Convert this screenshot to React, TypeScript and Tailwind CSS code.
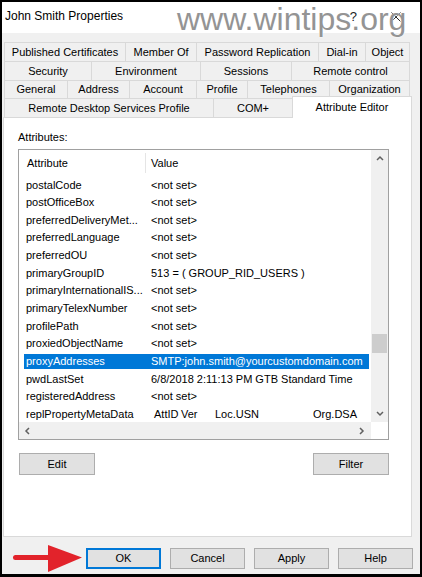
import React from "react";

type Tab = { label: string; w: string };

const tabRows: { h: string; tabs: Tab[] }[] = [
  {
    h: "h-[19px]",
    tabs: [
      { label: "Published Certificates", w: "w-[121px]" },
      { label: "Member Of", w: "w-[71px]" },
      { label: "Password Replication", w: "w-[122px]" },
      { label: "Dial-in", w: "w-[47px]" },
      { label: "Object", w: "w-[45px]" },
    ],
  },
  {
    h: "h-[19px]",
    tabs: [
      { label: "Security", w: "w-[87px]" },
      { label: "Environment", w: "w-[109px]" },
      { label: "Sessions", w: "w-[91px]" },
      { label: "Remote control", w: "w-[119px]" },
    ],
  },
  {
    h: "h-[18px]",
    tabs: [
      { label: "General", w: "w-[63px]" },
      { label: "Address", w: "w-[62px]" },
      { label: "Account", w: "w-[67px]" },
      { label: "Profile", w: "w-[51px]" },
      { label: "Telephones", w: "w-[82px]" },
      { label: "Organization", w: "w-[81px]" },
    ],
  },
];

const attributes: [string, string][] = [
  ["postalCode", "<not set>"],
  ["postOfficeBox", "<not set>"],
  ["preferredDeliveryMet...", "<not set>"],
  ["preferredLanguage", "<not set>"],
  ["preferredOU", "<not set>"],
  ["primaryGroupID", "513 = ( GROUP_RID_USERS )"],
  ["primaryInternationalIS...", "<not set>"],
  ["primaryTelexNumber", "<not set>"],
  ["profilePath", "<not set>"],
  ["proxiedObjectName", "<not set>"],
  ["proxyAddresses", "SMTP:john.smith@yourcustomdomain.com"],
  ["pwdLastSet", "6/8/2018 2:11:13 PM GTB Standard Time"],
  ["registeredAddress", "<not set>"],
];

const SELECTED = "proxyAddresses";

function Chevron({ dir }: { dir: "up" | "down" | "left" | "right" }) {
  const pts = {
    up: "1,5 4,2 7,5",
    down: "1,2 4,5 7,2",
    left: "5,1 2,4 5,7",
    right: "2,1 5,4 2,7",
  }[dir];
  return (
    <svg width="8" height="8" viewBox="0 0 8 8">
      <polyline points={pts} fill="none" stroke="#606060" strokeWidth="1.5" />
    </svg>
  );
}

function Button({ label, primary }: { label: string; primary?: boolean }) {
  return (
    <div
      className={`flex items-center justify-center bg-[#e1e1e1] ${
        primary ? "border-2 border-[#0078d7]" : "border border-[#adadad]"
      } w-[75px] h-[21px]`}
    >
      {label}
    </div>
  );
}

export default function App() {
  return (
    <div className="relative w-[422px] h-[577px] border-2 border-b-[3px] border-black bg-[#f0f0f0] font-['Liberation_Sans',Arial,sans-serif] text-[11px] text-black flex flex-col overflow-hidden">
      {/* title bar */}
      <div className="h-[31px] bg-white flex items-start justify-between pl-[3px] pr-[19px]">
        <span className="pt-[7px] text-[12px] leading-[14px]">John Smith Properties</span>
        <div className="flex items-center gap-[34px] pt-[8px]">
          <span className="text-[13px] leading-[14px] text-[#222]">?</span>
          <svg width="10" height="10" viewBox="0 0 10 10">
            <path d="M0.5 0.5 L9.5 9.5 M9.5 0.5 L0.5 9.5" stroke="#222" strokeWidth="1" />
          </svg>
        </div>
      </div>

      {/* tabs */}
      <div className="pt-[9px]">
        {tabRows.map((row, r) => (
          <div key={r} className={`flex ml-[2px] ${row.h}`}>
            {row.tabs.map((t, i) => (
              <div
                key={t.label}
                className={`${t.w} flex items-center justify-center border-t border-l border-[#d9d9d9] ${
                  i === row.tabs.length - 1 ? "border-r" : ""
                }`}
              >
                {t.label}
              </div>
            ))}
          </div>
        ))}
        <div className="flex ml-[2px] h-[19px]">
          <div className="w-[209px] flex items-center justify-center border-t border-l border-[#d9d9d9]">
            Remote Desktop Services Profile
          </div>
          <div className="w-[79px] flex items-center justify-center border-t border-l border-[#d9d9d9]">
            COM+
          </div>
          <div className="relative z-10 -mt-[2px] w-[120px] h-[22px] pb-[1px] bg-white flex items-center justify-center border-t border-l border-r border-[#d9d9d9]">
            Attribute Editor
          </div>
        </div>
      </div>

      {/* attribute editor page */}
      <div className="ml-[1px] w-[409px] h-[420px] bg-white border border-[#d9d9d9] pl-[14px]">
        <div className="pt-[12px] leading-[15px]">Attributes:</div>

        <div className="mt-[4px] w-[371px] h-[291px] border border-[#a0a0a0] flex flex-col">
          <div className="flex h-[272px]">
            <div className="w-[352px] overflow-hidden">
              <div className="flex h-[26px] items-center">
                <div className="w-[126px] pl-[8px]">Attribute</div>
                <div className="w-px h-[20px] bg-[#e5e5e5]" />
                <div className="pl-[5px]">Value</div>
              </div>
              {attributes.map(([name, value]) => (
                <div key={name} className="h-[17.65px] flex items-center pl-[5px]">
                  <div
                    className={`w-[345px] h-[15px] flex items-center whitespace-nowrap ${
                      name === SELECTED ? "bg-[#0078d7] text-white" : ""
                    }`}
                  >
                    <span className="w-[124px] pl-[2px]">{name}</span>
                    <span className="pl-[3px]">{value}</span>
                  </div>
                </div>
              ))}
              <div className="h-[17.65px] flex items-center pl-[5px] whitespace-nowrap">
                <span className="w-[124px] pl-[2px]">replPropertyMetaData</span>
                <span className="w-[33px] pl-[6px]">AttID</span>
                <span className="w-[34px]">Ver</span>
                <span className="w-[98px]">Loc.USN</span>
                <span>Org.DSA</span>
              </div>
            </div>
            {/* vertical scrollbar */}
            <div className="w-[17px] bg-[#f0f0f0] flex flex-col">
              <div className="h-[17px] flex items-center justify-center">
                <Chevron dir="up" />
              </div>
              <div className="flex-1 px-[1px]">
                <div className="mt-[167px] h-[19px] bg-[#cdcdcd]" />
              </div>
              <div className="h-[17px] flex items-center justify-center">
                <Chevron dir="down" />
              </div>
            </div>
          </div>
          {/* horizontal scrollbar */}
          <div className="flex h-[17px]">
            <div className="w-[352px] bg-[#f0f0f0] flex items-center justify-between px-[5px]">
              <Chevron dir="left" />
              <Chevron dir="right" />
            </div>
            <div className="w-[17px] bg-white" />
          </div>
        </div>

        <div className="mt-[13px] ml-[1px] w-[370px] flex justify-between">
          <div className="w-[76px] h-[22px] bg-[#e1e1e1] border border-[#adadad] flex items-center justify-center">
            Edit
          </div>
          <div className="w-[76px] h-[22px] bg-[#e1e1e1] border border-[#adadad] flex items-center justify-center">
            Filter
          </div>
        </div>
      </div>

      {/* dialog buttons */}
      <div className="mt-[11px] flex justify-end gap-[9px] pr-[7px]">
        <Button label="OK" primary />
        <Button label="Cancel" />
        <Button label="Apply" />
        <Button label="Help" />
      </div>

      {/* site watermark */}
      <div className="absolute left-[175px] top-[1px] text-[32px] leading-none text-[#949494] [text-shadow:0_0_2px_#fff,0_0_1px_#fff] font-['Liberation_Sans',Arial,sans-serif]">
        www.wintips.org
      </div>

      {/* red pointer arrow */}
      <svg
        className="absolute left-[10px] top-[542px]"
        width="72"
        height="30"
        viewBox="0 0 72 30"
      >
        <line x1="3.5" y1="13.5" x2="40" y2="13.5" stroke="#e2232b" strokeWidth="5" strokeLinecap="round" />
        <polygon points="36,1 70,13.5 36,28" fill="#e2232b" />
      </svg>
    </div>
  );
}
